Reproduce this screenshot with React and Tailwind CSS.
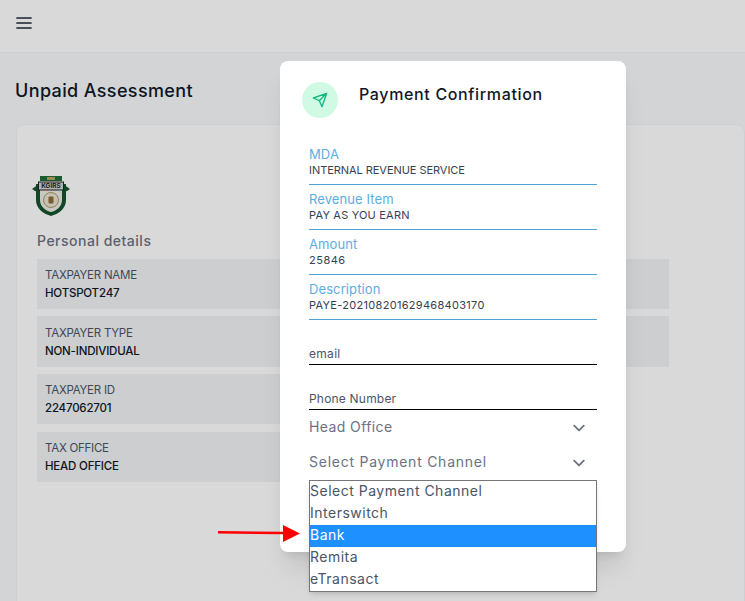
const font = { fontFamily: "Inter, sans-serif" };

const details = [
  ["TAXPAYER NAME", "HOTSPOT247", "h-[50px]"],
  ["TAXPAYER TYPE", "NON-INDIVIDUAL", "h-[51px]"],
  ["TAXPAYER ID", "2247062701", "h-[50px]"],
  ["TAX OFFICE", "HEAD OFFICE", "h-[50px] mt-px"],
];

const confirmed = [
  ["MDA", "INTERNAL REVENUE SERVICE", "tracking-[-0.05px]"],
  ["Revenue Item", "PAY AS YOU EARN", "tracking-[0.2px]"],
  ["Amount", "25846", "tracking-[0.5px]"],
  ["Description", "PAYE-202108201629468403170", "tracking-[0.3px]"],
];

const channels = ["Select Payment Channel", "Interswitch", "Bank", "Remita", "eTransact"];

function Logo() {
  return (
    <svg width="38" height="40" viewBox="0 0 38 40" className="ml-[-5px]">
      <path d="M0 13 L7 8 L7 16 L3 15 Z M38 13 L31 8 L31 16 L35 15 Z" fill="#14532d" />
      <path d="M4 8 H34 V24 C34 33 26 38 19 40 C12 38 4 33 4 24 Z" fill="#14532d" />
      <path d="M8 10 H30 V24 C30 31 24 35 19 36 C14 35 8 31 8 24 Z" fill="#ecebe4" />
      <rect x="8" y="0" width="22" height="5" fill="#1f6b3a" />
      <rect x="15" y="1" width="8" height="3" fill="#b9a35c" />
      <rect x="6.5" y="6" width="25" height="8" fill="#d2d2d0" stroke="#222" />
      <text x="19" y="12.4" textAnchor="middle" fontSize="6.5" fontWeight="700" fill="#222">KGIRS</text>
      <circle cx="19" cy="24" r="7.5" fill="#e8e2cf" stroke="#a89a6a" />
      <rect x="16.5" y="20.5" width="5" height="7" rx="1" fill="#8a6d3b" />
    </svg>
  );
}

function SelectRow({ label, className = "" }) {
  return (
    <div className={`flex items-center justify-between h-[35px] text-sm text-gray-500 ${className}`}>
      <span>{label}</span>
      <svg width="24" height="24" viewBox="0 0 20 20" fill="none" className="mr-[6px] mt-0.5">
        <path d="M6 8l4 4 4-4" stroke="#6b7280" strokeWidth="1.5" strokeLinecap="round" strokeLinejoin="round" />
      </svg>
    </div>
  );
}

export default function App() {
  return (
    <div className="relative h-screen overflow-hidden bg-[#f8f9fc]" style={font}>
      <header className="h-[53px] bg-white border-b border-gray-100 flex items-start pl-3 pt-3">
        <svg width="24" height="24" viewBox="0 0 24 24" fill="none" stroke="#1f2937" strokeWidth="1.7" strokeLinecap="round">
          <path d="M5 6h14M5 11h14M5 16h14" />
        </svg>
      </header>

      <main className="pl-4 pt-[24px]">
        <h1 className="ml-[-1px] text-lg font-medium leading-[28px] text-gray-900 tracking-[0.37px]">Unpaid Assessment</h1>
        <div className="mt-[19px] h-[500px] bg-white border border-gray-100 rounded-lg pl-[20px] pt-[51px]">
          <Logo />
          <h2 className="mt-[15px] text-sm font-medium leading-[20px] text-gray-500 tracking-[0.5px]">Personal details</h2>
          <div className="mt-[8px] w-[632px] grid grid-cols-2 items-start">
            <div className="flex flex-col gap-[7px]">
              {details.map(([k, v, h]) => (
                <div key={k} className={`${h} bg-[#f1f2f5] pl-2 flex flex-col justify-center`}>
                  <div className="text-[11.5px] leading-[18px] text-gray-600 tracking-[-0.25px]">{k}</div>
                  <div className="text-[11.5px] leading-[18px] font-medium text-gray-900 tracking-[-0.2px]">{v}</div>
                </div>
              ))}
            </div>
            <div className="flex flex-col gap-[7px]">
              <div className="h-[50px] bg-[#f1f2f5]" />
              <div className="h-[51px] bg-[#f1f2f5]" />
            </div>
          </div>
        </div>
      </main>

      <div className="absolute inset-0 bg-black/15 pl-[280px] pt-[61px]">
        <div className="relative w-[346px] h-[491px] bg-white rounded-lg shadow-xl">
          <div className="flex pl-[22px] pt-[21px]">
            <div className="w-9 h-9 rounded-full bg-[#d1fae5] flex items-center justify-center">
              <svg width="16" height="16" viewBox="0 0 24 24" fill="none" stroke="#10b981" strokeWidth="2" strokeLinecap="round" strokeLinejoin="round">
                <path d="M22 2 11 13M22 2 15 22 11 13 2 9Z" />
              </svg>
            </div>
            <h3 className="ml-[21px] mt-[1px] text-base font-medium leading-[22px] text-gray-900 tracking-[0.65px]">Payment Confirmation</h3>
          </div>

          <div className="mx-[29px] mt-[22px]">
            {confirmed.map(([k, v, t]) => (
              <div key={k} className="h-[45px] border-b border-[#4fa3d9] pt-[6px]">
                <div className="text-[13px] leading-[17px] text-[#5dade2] tracking-[0.1px]">{k}</div>
                <div className={`text-[11px] leading-[15px] text-gray-700 ${t}`}>{v}</div>
              </div>
            ))}
            <div className="h-[45px] border-b-[1.5px] border-black flex items-end pb-[2px] text-xs text-gray-600 tracking-[0.3px]">email</div>
            <div className="h-[45px] border-b-[1.5px] border-black flex items-end pb-[2px] text-xs text-gray-600 tracking-[0.2px]">Phone Number</div>
            <SelectRow label={<span className="tracking-[0.4px]">Head Office</span>} className="mt-[-1px]" />
            <SelectRow label={<span className="tracking-[0.75px]">Select Payment Channel</span>} />
          </div>

          <ul className="absolute left-[29px] top-[419px] w-[288px] bg-white border border-[#767676] shadow-md text-sm text-gray-600 tracking-[0.5px]">
            {channels.map((c) => (
              <li key={c} className={`h-[22px] leading-[20px] ${c === "Bank" ? "bg-[#1e90ff] text-white" : ""}`}>
                {c}
              </li>
            ))}
          </ul>
        </div>
        <svg width="84" height="20" viewBox="0 0 84 20" className="absolute left-[217px] top-[524px]">
          <path d="M1 8.2 L67 9" stroke="#ff0000" strokeWidth="2.5" />
          <path d="M66 1 L83 9.5 L66 18 Z" fill="#ff0000" />
        </svg>
      </div>
    </div>
  );
}
